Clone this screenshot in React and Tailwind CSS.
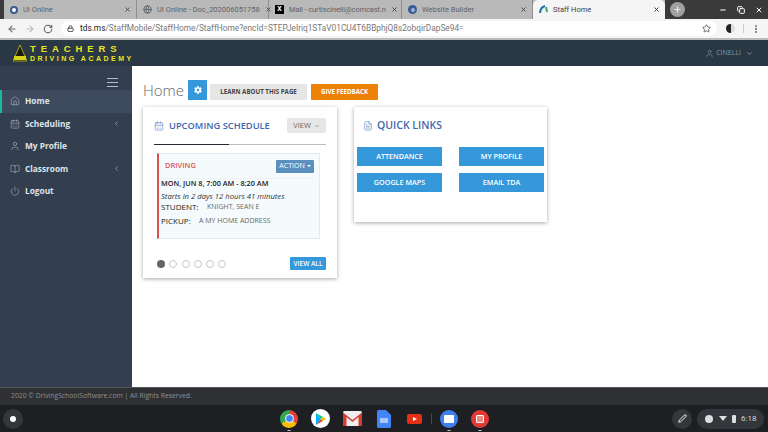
import React from 'react'
import { ArrowLeft, ArrowRight, RotateCw, Lock, Star, MoreVertical, X, Plus, Minus, Copy, Globe, CalendarDays, User, BookOpen, Power, Home, ChevronLeft, ChevronDown, FileText, Pen } from 'lucide-react'
import { FaCog } from 'react-icons/fa'

const tabs = [
  { title: 'UI Online', width: 'w-[133px]', icon: <span className="shrink-0 w-[8px] h-[8px] rounded-full bg-white border-2 border-[#3b5a94]" /> },
  { title: 'UI Online - Doc_202006051758', width: 'w-[132px]', icon: <Globe className="shrink-0 w-[9px] h-[9px] text-[#5f6368]" strokeWidth={2.5} /> },
  { title: 'Mail - curtiscinelli@comcast.n', tight: true, width: 'w-[133px]', icon: <span className="shrink-0 w-[9px] h-[9px] bg-black text-white text-[7px] leading-[9px] text-center font-bold">X</span> },
  { title: 'Website Builder', width: 'w-[131px]', icon: <span className="shrink-0 w-[9px] h-[9px] rounded-full bg-[#3b5a94] flex items-center justify-center"><span className="w-[4px] h-[4px] rounded-full bg-[#9db3d6]" /></span> },
]

const navItems = [
  { label: 'Home', Icon: Home, active: true },
  { label: 'Scheduling', Icon: CalendarDays, arrow: true },
  { label: 'My Profile', Icon: User },
  { label: 'Classroom', Icon: BookOpen, arrow: true },
  { label: 'Logout', Icon: Power },
]

const quickLinks = ['ATTENDANCE', 'MY PROFILE', 'GOOGLE MAPS', 'EMAIL TDA']

function TabStrip() {
  return (
    <div className="h-[19px] flex bg-[#b9b9b9] text-[#5f6368] text-[7.5px] font-['Roboto',sans-serif]">
      <div className="w-[4px] bg-[#3a3a3a]" />
      {tabs.map((t) => (
        <div key={t.title} className={`${t.width} shrink-0 flex items-center pl-[6px] pr-[5px] gap-[5px] border-r border-[#8f8f8f]`}>
          {t.icon}
          <span className={`flex-1 whitespace-nowrap ${t.tight ? 'tracking-[-0.12px]' : ''}`}>{t.title}</span>
          <X className="w-[7px] h-[7px] text-[#444] shrink-0" strokeWidth={3} />
        </div>
      ))}
      <div className="w-[132px] shrink-0 bg-[#f5f5f5] rounded-t-[5px] flex items-center pl-[6px] pr-[5px] gap-[5px] text-[#3c4043]">
        <svg width="9" height="9" viewBox="0 0 9 9" fill="none">
          <path d="M1 8 Q1.5 2 6 1" stroke="#1d6fa5" strokeWidth="2" />
          <path d="M7 2 L8 7" stroke="#3fa96b" strokeWidth="2" />
        </svg>
        <span className="flex-1 whitespace-nowrap">Staff Home</span>
        <X className="w-[7px] h-[7px] text-[#333] shrink-0" strokeWidth={3} />
      </div>
      <div className="flex-1 bg-[#3a3a3a] flex items-center pl-[5px] pr-[5px]">
        <span className="w-[15px] h-[15px] rounded-full bg-[#a0a0a0] flex items-center justify-center">
          <Plus className="w-[9px] h-[9px] text-[#eee]" strokeWidth={3} />
        </span>
        <div className="flex-1 flex justify-end items-center gap-[10px] text-white">
          <Minus className="w-[8px] h-[8px]" strokeWidth={3} />
          <Copy className="w-[8px] h-[8px]" strokeWidth={3} />
          <X className="w-[8px] h-[8px]" strokeWidth={3} />
        </div>
      </div>
    </div>
  )
}

function Toolbar() {
  return (
    <div className="h-[21px] bg-[#f5f5f5] flex items-center border-b-2 border-[#bbb] font-['Roboto',sans-serif]">
      <div className="w-[61px] flex items-center gap-[8px] pl-[7px] text-[#5f6368]">
        <ArrowLeft className="w-[10px] h-[10px]" strokeWidth={2.5} />
        <ArrowRight className="w-[10px] h-[10px] text-[#b8b8b8]" strokeWidth={2.5} />
        <RotateCw className="w-[10px] h-[10px]" strokeWidth={2.5} />
      </div>
      <div className="w-[656px] h-[15px] bg-white rounded-full flex items-center pl-[6px] pr-[6px] text-[8.3px]">
        <Lock className="w-[7px] h-[7px] text-[#444] mr-[6px]" strokeWidth={3} />
        <span className="flex-1 whitespace-nowrap text-[#777]">
          <span className="text-[#222]">tds.ms</span>/StaffMobile/StaffHome/StaffHome?encId=STEPJeIriq1STaV01CU4T6BBphjQ8s2obqirDapSe94=
        </span>
        <Star className="w-[9px] h-[9px] text-[#444]" strokeWidth={2} />
      </div>
      <span className="ml-[9px] w-[9px] h-[9px] rounded-full bg-[linear-gradient(90deg,#222_50%,#ddd_50%)]" />
      <span className="ml-[8px] w-px h-[9px] bg-[#ccc]" />
      <MoreVertical className="ml-[7px] w-[10px] h-[10px] text-[#555]" strokeWidth={2.5} />
    </div>
  )
}

function AppHeader() {
  return (
    <div className="h-[26px] bg-[#2a3744] flex items-center justify-between pl-[13px] pr-[15px]">
      <div className="flex items-center gap-[3px]">
        <svg width="14" height="17" viewBox="0 0 14 17">
          <polygon points="7,0 14,16 0,16" fill="#1a1a12" stroke="#c9c31a" strokeWidth="0.8" />
          <rect x="1" y="11" width="12" height="4" fill="#d8d21c" />
        </svg>
        <div className="font-['Liberation_Sans',sans-serif] font-bold text-[#e9e61e] leading-none">
          <div className="text-[9.5px] tracking-[4.9px]">TEACHERS</div>
          <div className="text-[7px] tracking-[2.5px] mt-[2px] whitespace-nowrap">DRIVING ACADEMY</div>
        </div>
      </div>
      <div className="flex items-center text-[#8e99a6] text-[7px] gap-[2px]">
        <User className="w-[9px] h-[9px]" strokeWidth={1.5} />
        <span>CINELLI</span>
        <ChevronDown className="w-[7px] h-[7px] ml-[3px]" strokeWidth={3} />
      </div>
    </div>
  )
}

function Sidebar() {
  return (
    <aside className="w-[132px] shrink-0 bg-[#333f4f] text-[#dfe4ea]">
      <div className="h-[24px] flex items-start justify-end pr-[14px] pt-[12px]">
        <div className="w-[11px] flex flex-col gap-[3px]">
          <span className="h-px bg-[#b5bcc5]" />
          <span className="h-px bg-[#b5bcc5]" />
          <span className="h-px bg-[#b5bcc5]" />
        </div>
      </div>
      {navItems.map(({ label, Icon, active, arrow }) => (
        <div key={label} className={`h-[22.5px] flex items-center text-[8.3px] font-bold pr-[12px] ${active ? 'bg-[#3e4b5e] border-l-[2px] border-[#1abb9c] pl-[8px]' : 'pl-[10px]'}`}>
          <Icon className="w-[10px] h-[10px] text-[#bcc3cc] mr-[5px]" strokeWidth={1.25} />
          <span className="flex-1">{label}</span>
          {arrow && <ChevronLeft className="w-[7px] h-[7px] text-[#bcc3cc]" strokeWidth={2} />}
        </div>
      ))}
    </aside>
  )
}

function ScheduleCard() {
  return (
    <section className="w-[194px] h-[171px] bg-white shadow-[0_1px_4px_rgba(0,0,0,0.35)] px-[11px] pt-[9px]">
      <div className="flex items-center h-[19px]">
        <CalendarDays className="w-[10px] h-[10px] text-[#5f86c0] mr-[5px]" strokeWidth={1.5} />
        <h2 className="flex-1 text-[9.3px] font-semibold text-[#3f67ae] whitespace-nowrap">UPCOMING SCHEDULE</h2>
        <div className="w-[39px] h-[15px] bg-[#e6e6e6] rounded-[2px] flex items-center justify-center gap-[3px] text-[7.5px] text-[#666]">
          VIEW
          <ChevronDown className="w-[6px] h-[6px]" strokeWidth={2} />
        </div>
      </div>
      <div className="mt-[9px] h-px bg-[#bdbdbd]">
        <div className="w-[75px] h-px bg-[#222a33]" />
      </div>
      <div className="mt-[8px] ml-[3px] w-[163px] h-[86px] bg-[#f5fbfd] border border-[#e4e9ec] border-l-[2px] border-l-[#d9534f] pl-[2px] pr-[5px] text-[#333]">
        <div className="flex items-center justify-between h-[25px] pl-[4px] border-b border-[#edf1f3]">
          <span className="text-[7.5px] font-semibold text-[#d9534f]">DRIVING</span>
          <span className="w-[38px] h-[13px] rounded-[1px] bg-[#5b8fc0] text-white text-[7px] flex items-center justify-center gap-[2px]">
            ACTION
            <span className="border-x-[2px] border-x-transparent border-t-[2px] border-t-white" />
          </span>
        </div>
        <div className="-mt-[1px] text-[7.3px] leading-[11px] font-semibold text-[#222] whitespace-nowrap">MON, JUN 8, 7:00 AM - 8:20 AM</div>
        <div className="text-[7.7px] italic mt-[2px] leading-[11px] whitespace-nowrap">Starts in 2 days 12 hours 41 minutes</div>
        <div className="-mt-[1px] flex items-center text-[8px] leading-[11px]">
          <span className="w-[46px] text-[#222]">STUDENT:</span>
          <span className="text-[7px] text-[#666]">KNIGHT, SEAN E</span>
        </div>
        <div className="flex items-center text-[8px] leading-[11px] mt-[3px]">
          <span className="w-[38px] text-[#222]">PICKUP:</span>
          <span className="text-[7px] text-[#666]">A MY HOME ADDRESS</span>
        </div>
      </div>
      <div className="mt-[18px] flex items-center justify-between ml-[3px]">
        <div className="flex gap-[4.3px]">
          <span className="w-[8px] h-[8px] rounded-full bg-[#666]" />
          {[1, 2, 3, 4, 5].map((n) => (
            <span key={n} className="w-[8px] h-[8px] rounded-full border border-[#c8c8c8]" />
          ))}
        </div>
        <span className="w-[36px] h-[13px] rounded-[1px] bg-[#3498db] text-white text-[6.5px] font-semibold flex items-center justify-center">VIEW ALL</span>
      </div>
    </section>
  )
}

function QuickLinksCard() {
  return (
    <section className="w-[193px] h-[115px] bg-white shadow-[0_1px_4px_rgba(0,0,0,0.35)] px-[3px] pt-[9px]">
      <div className="flex items-center h-[19px] pl-[6px]">
        <FileText className="w-[10px] h-[10px] text-[#5f86c0] mr-[4px]" strokeWidth={1.5} />
        <h2 className="text-[10.5px] font-semibold text-[#3f67ae]">QUICK LINKS</h2>
      </div>
      <div className="mt-[12px] grid grid-cols-2 gap-x-[17px] gap-y-[7px]">
        {quickLinks.map((link) => (
          <div key={link} className="h-[19px] bg-[#3498db] text-white text-[7.2px] font-semibold flex items-center justify-center">{link}</div>
        ))}
      </div>
    </section>
  )
}

function Main() {
  return (
    <main className="flex-1 bg-white pl-[11px] pt-[14px]">
      <div className="flex items-center h-[20px]">
        <h1 className="w-[45px] text-[15px] font-light text-[#666]">Home</h1>
        <span className="w-[19px] h-[20px] bg-[#3498db] flex items-center justify-center mr-[3px]">
          <FaCog className="w-[8px] h-[8px] text-white" />
        </span>
        <span className="w-[97px] h-[16px] mt-[3px] bg-[#e6e6e6] rounded-[1px] text-[#444] text-[6.2px] font-bold flex items-center justify-center mr-[4px]">LEARN ABOUT THIS PAGE</span>
        <span className="w-[67px] h-[16px] mt-[3px] bg-[#ee8208] rounded-[1px] text-white text-[6.2px] font-bold flex items-center justify-center">GIVE FEEDBACK</span>
      </div>
      <div className="mt-[7px] flex items-start gap-[17px]">
        <ScheduleCard />
        <QuickLinksCard />
      </div>
    </main>
  )
}

function OpenDash() {
  return <span className="absolute left-1/2 -translate-x-1/2 -bottom-[3px] w-[3px] h-px bg-[#ccc]" />
}

function Shelf() {
  return (
    <div className="h-[27px] bg-[#1d1f22] flex items-center pl-[3px] pr-[4px]">
      <span className="w-[20px] h-[20px] rounded-full bg-[#33363a] flex items-center justify-center">
        <span className="w-[6px] h-[6px] rounded-full bg-white" />
      </span>
      <div className="ml-[257px] flex items-center gap-[13px]">
        <span className="relative w-[18px] h-[18px] rounded-full bg-[conic-gradient(#ea4335_0_33%,#fbbc05_33%_66%,#34a853_66%)] flex items-center justify-center">
          <span className="w-[9px] h-[9px] rounded-full bg-[#4285f4] border border-white" />
          <OpenDash />
        </span>
        <span className="w-[19px] h-[19px] rounded-full bg-white flex items-center justify-center">
          <svg width="11" height="12" viewBox="0 0 11 12">
            <polygon points="1,0 6,6 1,12" fill="#00b0ff" />
            <polygon points="1,0 8,4 6,6" fill="#00d26a" />
            <polygon points="1,12 8,8 6,6" fill="#ea4335" />
            <polygon points="8,4 11,6 8,8 6,6" fill="#fbbc05" />
          </svg>
        </span>
        <svg width="19" height="15" viewBox="0 0 19 15">
          <rect width="19" height="15" rx="1.5" fill="#eee" />
          <path d="M0 1.5 L9.5 9 L19 1.5 V15 H15.5 V6 L9.5 11 L3.5 6 V15 H0 Z" fill="#d93a2e" />
        </svg>
        <svg className="ml-[2px]" width="14" height="18" viewBox="0 0 14 18">
          <path d="M0 1.5 Q0 0 1.5 0 H9 L14 5 V16.5 Q14 18 12.5 18 H1.5 Q0 18 0 16.5 Z" fill="#4285f4" />
          <rect x="3" y="8" width="8" height="5" fill="#a9c6f8" />
        </svg>
        <span className="w-[15px] h-[10px] ml-[3px] rounded-[2px] bg-[#e62f17] flex items-center justify-center">
          <span className="border-y-[2px] border-y-transparent border-l-[4px] border-l-white" />
        </span>
        <span className="w-px h-[11px] bg-[#44474b] -mx-[4px]" />
        <span className="relative w-[18px] h-[18px] -ml-[1px] rounded-full bg-[#3f80ef] flex items-center justify-center">
          <span className="w-[10px] h-[8px] rounded-[1px] bg-white" />
          <OpenDash />
        </span>
        <span className="relative w-[18px] h-[18px] rounded-full bg-[#e23b35] flex items-center justify-center">
          <span className="w-[8px] h-[8px] rounded-[1px] border border-white bg-[#ee8a86]" />
          <OpenDash />
        </span>
      </div>
      <div className="ml-auto flex items-center gap-[5px] text-[#d5d7d9]">
        <span className="w-[20px] h-[20px] rounded-full bg-[#33363a] flex items-center justify-center">
          <Pen className="w-[9px] h-[9px] text-white" strokeWidth={2.5} />
        </span>
        <div className="w-[67px] h-[20px] rounded-full bg-[#33363a] flex items-center pl-[8px] gap-[5px] text-[8px] font-['Roboto',sans-serif]">
          <span className="w-[8px] h-[8px] rounded-full bg-[#ddd]" />
          <span className="ml-[1px] border-x-[4px] border-x-transparent border-t-[5px] border-t-[#ddd]" />
          <span className="w-[4px] h-[8px] rounded-[1px] bg-[#ddd]" />
          <span>6:18</span>
        </div>
      </div>
    </div>
  )
}

export default function App() {
  return (
    <div className="w-[768px] h-[432px] overflow-hidden flex flex-col font-['Open_Sans',sans-serif]">
      <TabStrip />
      <Toolbar />
      <AppHeader />
      <div className="flex h-[321px]">
        <Sidebar />
        <Main />
      </div>
      <footer className="h-[18px] bg-[#2e3033] border-t border-[#555] flex items-center pl-[11px] text-[#8d9095] text-[6.8px]">
        2020 © DrivingSchoolSoftware.com | All Rights Reserved.
      </footer>
      <Shelf />
    </div>
  )
}
